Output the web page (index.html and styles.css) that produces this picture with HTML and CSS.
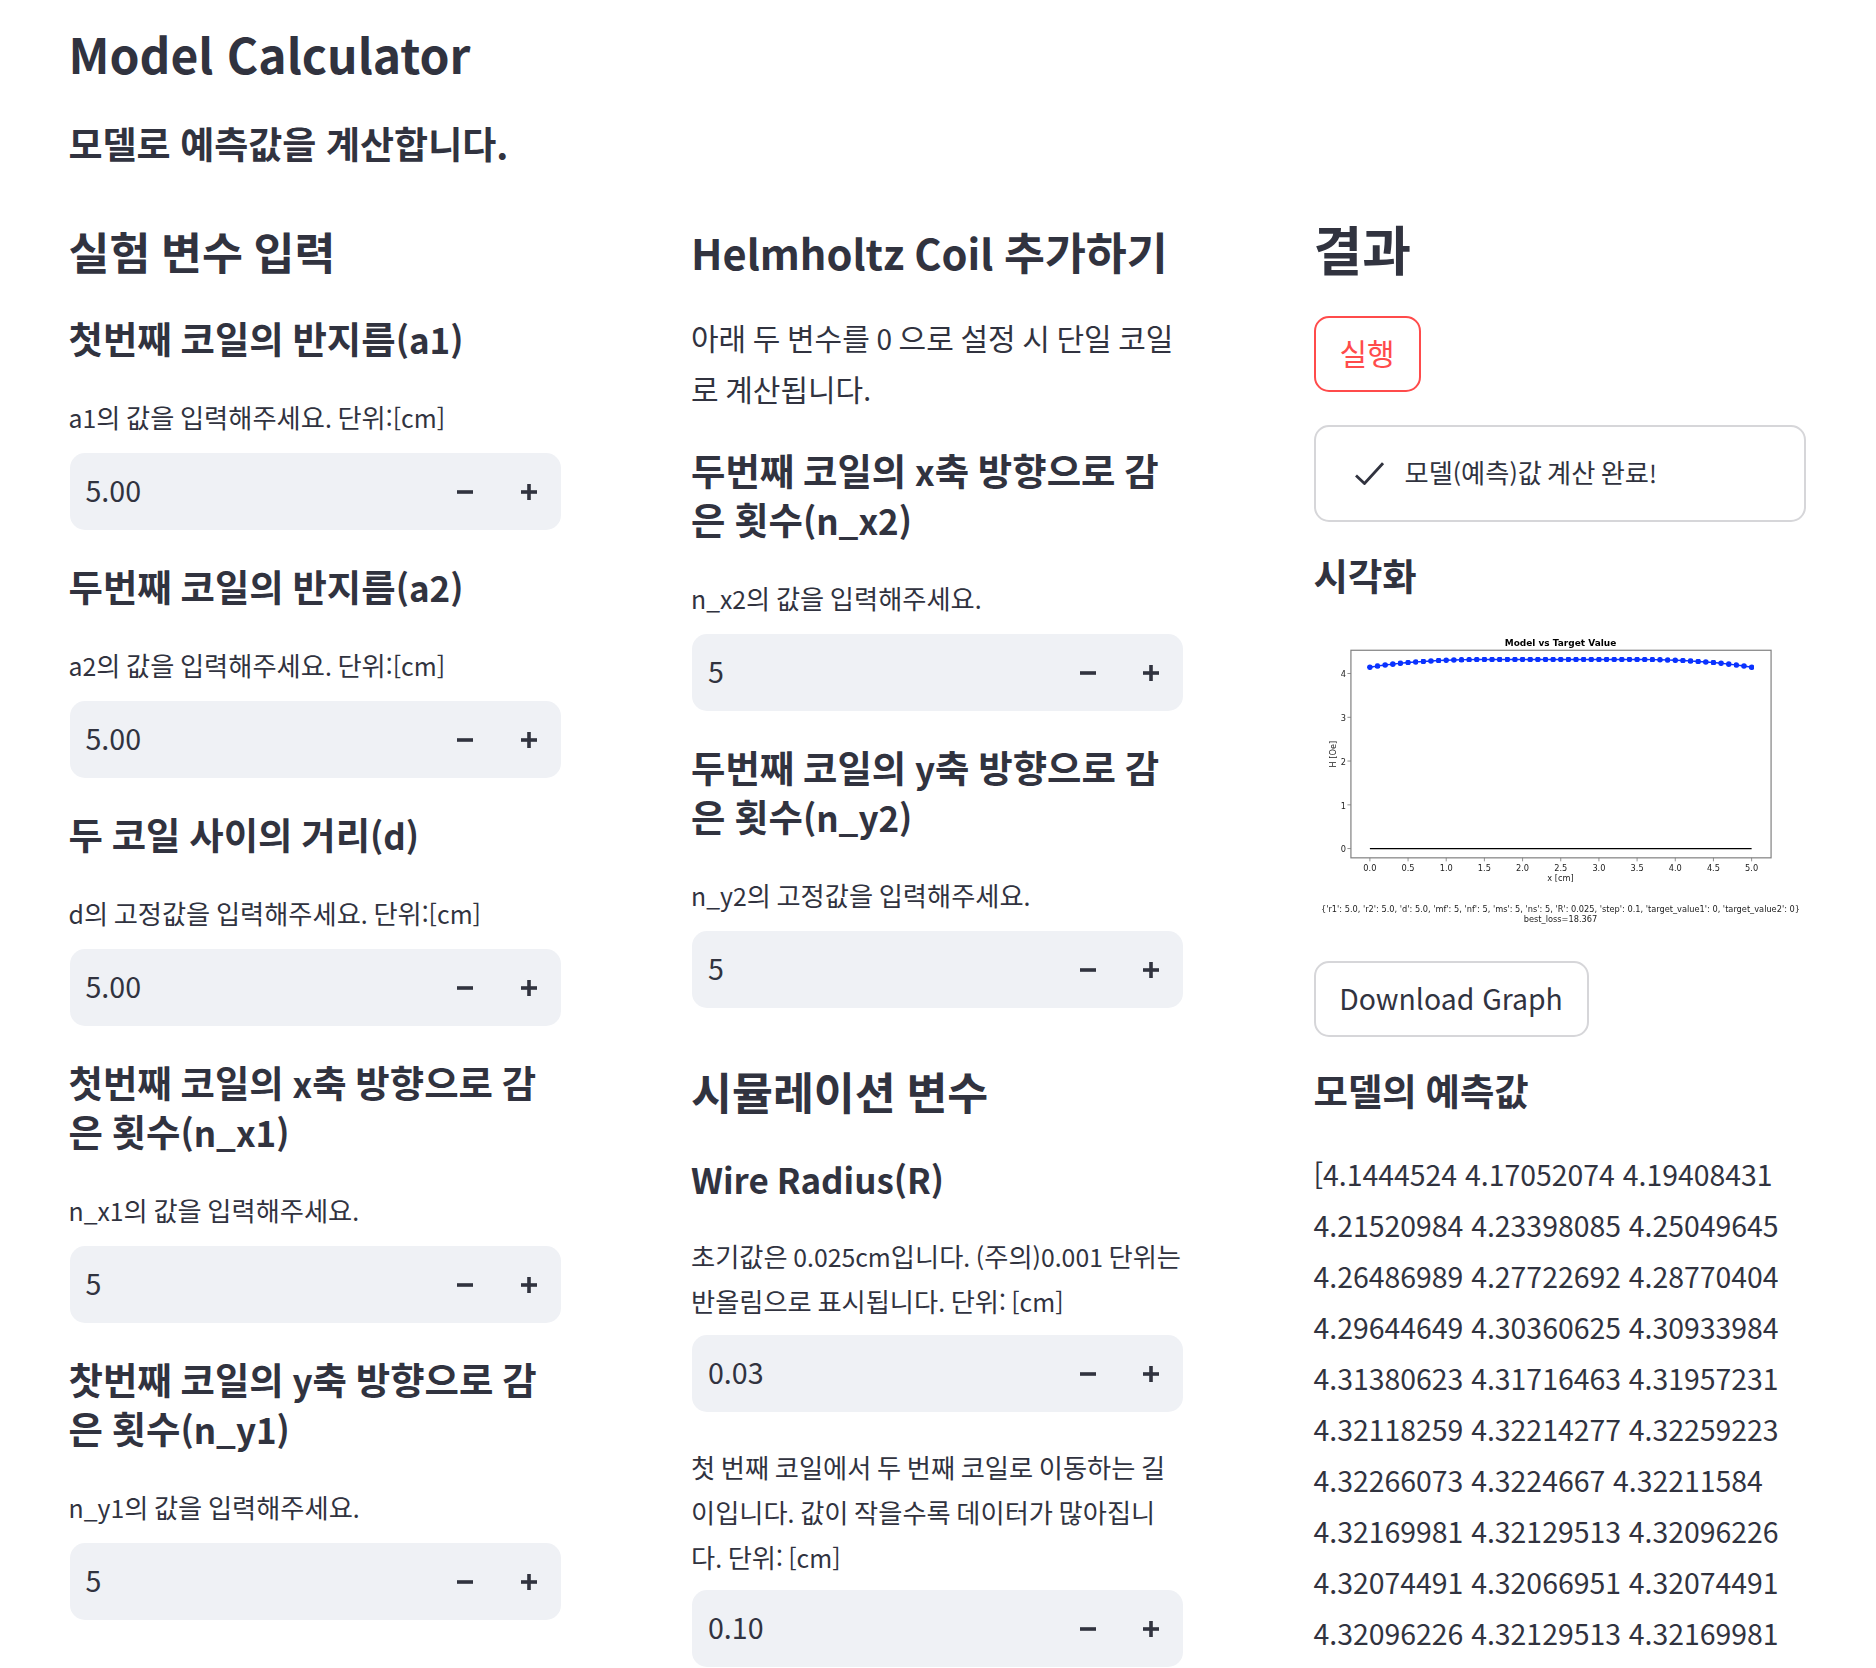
FILE: index.html
```html
<!DOCTYPE html>
<html lang="ko">
<head>
<meta charset="utf-8">
<title>Model Calculator</title>
<link rel="stylesheet" href="styles.css">
</head>
<body>
<svg class="defs" width="0" height="0" aria-hidden="true">
  <defs>
    <marker id="dot" viewBox="0 0 6 6" refX="3" refY="3" markerWidth="5.6" markerHeight="5.6" markerUnits="userSpaceOnUse"><circle cx="3" cy="3" r="3" fill="#0a32ff"/></marker>
    <symbol id="minus" viewBox="0 0 16 16"><rect x="0" y="6.2" width="16" height="3.6"/></symbol>
    <symbol id="plus" viewBox="0 0 16 16"><rect x="0" y="6.2" width="16" height="3.6"/><rect x="6.2" y="0" width="3.6" height="16"/></symbol>
  </defs>
</svg>
<main class="page">
  <h1 class="title">Model Calculator</h1>
  <p class="subtitle">모델로 예측값을 계산합니다.</p>
  <div class="columns">
    <section class="col">
      <h2 class="h2">실험 변수 입력</h2>
      <h3 class="h3 first">첫번째 코일의 반지름<span class="lat">(a1)</span></h3>
      <p class="label"><span class="lat">a1</span>의 값을 입력해주세요<span class="lat">.</span> 단위<span class="lat">:[cm]</span></p>
      <div class="num"><span class="val">5.00</span><span class="step"><svg class="ic"><use href="#minus"/></svg></span><span class="step"><svg class="ic"><use href="#plus"/></svg></span></div>
      <h3 class="h3">두번째 코일의 반지름<span class="lat">(a2)</span></h3>
      <p class="label"><span class="lat">a2</span>의 값을 입력해주세요<span class="lat">.</span> 단위<span class="lat">:[cm]</span></p>
      <div class="num"><span class="val">5.00</span><span class="step"><svg class="ic"><use href="#minus"/></svg></span><span class="step"><svg class="ic"><use href="#plus"/></svg></span></div>
      <h3 class="h3">두 코일 사이의 거리<span class="lat">(d)</span></h3>
      <p class="label"><span class="lat">d</span>의 고정값을 입력해주세요<span class="lat">.</span> 단위<span class="lat">:[cm]</span></p>
      <div class="num"><span class="val">5.00</span><span class="step"><svg class="ic"><use href="#minus"/></svg></span><span class="step"><svg class="ic"><use href="#plus"/></svg></span></div>
      <h3 class="h3">첫번째 코일의 <span class="lat">x</span>축 방향으로 감은 횟수<span class="lat">(n_x1)</span></h3>
      <p class="label"><span class="lat">n_x1</span>의 값을 입력해주세요<span class="lat">.</span></p>
      <div class="num"><span class="val">5</span><span class="step"><svg class="ic"><use href="#minus"/></svg></span><span class="step"><svg class="ic"><use href="#plus"/></svg></span></div>
      <h3 class="h3">찻번째 코일의 <span class="lat">y</span>축 방향으로 감은 횟수<span class="lat">(n_y1)</span></h3>
      <p class="label"><span class="lat">n_y1</span>의 값을 입력해주세요<span class="lat">.</span></p>
      <div class="num"><span class="val">5</span><span class="step"><svg class="ic"><use href="#minus"/></svg></span><span class="step"><svg class="ic"><use href="#plus"/></svg></span></div>
    </section>
    <section class="col">
      <h2 class="h2"><span class="lat">Helmholtz Coil</span> 추가하기</h2>
      <p class="body">아래 두 변수를 <span class="lat">0</span> 으로 설정 시 단일 코일로 계산됩니다<span class="lat">.</span></p>
      <h3 class="h3">두번째 코일의 <span class="lat">x</span>축 방향으로 감은 횟수<span class="lat">(n_x2)</span></h3>
      <p class="label"><span class="lat">n_x2</span>의 값을 입력해주세요<span class="lat">.</span></p>
      <div class="num"><span class="val">5</span><span class="step"><svg class="ic"><use href="#minus"/></svg></span><span class="step"><svg class="ic"><use href="#plus"/></svg></span></div>
      <h3 class="h3">두번째 코일의 <span class="lat">y</span>축 방향으로 감은 횟수<span class="lat">(n_y2)</span></h3>
      <p class="label"><span class="lat">n_y2</span>의 고정값을 입력해주세요<span class="lat">.</span></p>
      <div class="num"><span class="val">5</span><span class="step"><svg class="ic"><use href="#minus"/></svg></span><span class="step"><svg class="ic"><use href="#plus"/></svg></span></div>
      <h2 class="h2 section">시뮬레이션 변수</h2>
      <h3 class="h3 first"><span class="lat">Wire Radius(R)</span></h3>
      <p class="label note-a">초기값은 <span class="lat">0.025cm</span>입니다<span class="lat">.</span> <span class="lat">(</span>주의<span class="lat">)0.001</span> 단위는 반올림으로 표시됩니다<span class="lat">.</span> 단위<span class="lat">: [cm]</span></p>
      <div class="num tight"><span class="val">0.03</span><span class="step"><svg class="ic"><use href="#minus"/></svg></span><span class="step"><svg class="ic"><use href="#plus"/></svg></span></div>
      <p class="label note-b">첫 번째 코일에서 두 번째 코일로 이동하는 길이입니다<span class="lat">.</span> 값이 작을수록 데이터가 많아집니다<span class="lat">.</span> 단위<span class="lat">: [cm]</span></p>
      <div class="num tighter"><span class="val">0.10</span><span class="step"><svg class="ic"><use href="#minus"/></svg></span><span class="step"><svg class="ic"><use href="#plus"/></svg></span></div>
    </section>
    <section class="col">
      <h2 class="h1b">결과</h2>
      <div class="btn run"><span>실행</span></div>
      <div class="alert">
        <svg class="check" viewBox="0 0 29 23"><path d="M1 13.5 L9.5 21.5 L28 1.2"/></svg>
        <span class="alert-text">모델<span class="lat">(</span>예측<span class="lat">)</span>값 계산 완료<span class="lat">!</span></span>
      </div>
      <h3 class="h3 viz">시각화</h3>
      <svg class="chart" viewBox="0 0 493 320" role="img">
        <rect class="frame" x="37" y="31" width="421" height="208"/>
        <g class="ticks">
          <path d="M33.5 54.3H37M33.5 98.2H37M33.5 142H37M33.5 185.9H37M33.5 229.7H37"/>
          <path d="M56 239v3.5M94.25 239v3.5M132.5 239v3.5M170.75 239v3.5M209 239v3.5M247.25 239v3.5M285.5 239v3.5M323.75 239v3.5M362 239v3.5M400.25 239v3.5M438.5 239v3.5"/>
        </g>
        <line class="target" x1="56" y1="229.7" x2="438.5" y2="229.7"/>
        <polyline class="model" points="56,48 63.65,46.8 71.3,45.8 78.95,44.9 86.6,44 94.25,43.3 101.9,42.7 109.55,42.2 117.2,41.7 124.85,41.3 132.5,41 140.15,40.7 147.8,40.5 155.45,40.4 163.1,40.3 170.75,40.2 178.4,40.2 186.05,40.2 193.7,40.2 201.35,40.2 209,40.2 216.65,40.2 224.3,40.2 231.95,40.2 239.6,40.2 247.25,40.2 254.9,40.2 262.55,40.2 270.2,40.2 277.85,40.2 285.5,40.2 293.15,40.2 300.8,40.2 308.45,40.2 316.1,40.2 323.75,40.2 331.4,40.3 339.05,40.4 346.7,40.5 354.35,40.7 362,41 369.65,41.3 377.3,41.7 384.95,42.2 392.6,42.7 400.25,43.3 407.9,44 415.55,44.9 423.2,45.8 430.85,46.8 438.5,48"/>
        <text class="ct bold" x="247" y="26.5">Model vs Target Value</text>
        <g class="yl">
          <text x="32" y="58">4</text><text x="32" y="102">3</text><text x="32" y="146">2</text><text x="32" y="190">1</text><text x="32" y="233.5">0</text>
        </g>
        <g class="ct">
          <text x="56" y="252">0.0</text><text x="94.25" y="252">0.5</text><text x="132.5" y="252">1.0</text><text x="170.75" y="252">1.5</text><text x="209" y="252">2.0</text><text x="247.25" y="252">2.5</text><text x="285.5" y="252">3.0</text><text x="323.75" y="252">3.5</text><text x="362" y="252">4.0</text><text x="400.25" y="252">4.5</text><text x="438.5" y="252">5.0</text>
          <text x="247" y="262">x [cm]</text>
          <text x="247" y="293">{'r1': 5.0, 'r2': 5.0, 'd': 5.0, 'mf': 5, 'nf': 5, 'ms': 5, 'ns': 5, 'R': 0.025, 'step': 0.1, 'target_value1': 0, 'target_value2': 0}</text>
          <text x="247" y="303">best_loss=18.367</text>
          <text x="22" y="135" transform="rotate(-90 22 135)">H [Oe]</text>
        </g>
      </svg>
      <div class="btn dl"><span>Download Graph</span></div>
      <h3 class="h3 pred">모델의 예측값</h3>
      <p class="body values">[4.1444524 4.17052074 4.19408431 4.21520984 4.23398085 4.25049645 4.26486989 4.27722692 4.28770404 4.29644649 4.30360625 4.30933984 4.31380623 4.31716463 4.31957231 4.32118259 4.32214277 4.32259223 4.32266073 4.3224667 4.32211584 4.32169981 4.32129513 4.32096226 4.32074491 4.32066951 4.32074491 4.32096226 4.32129513 4.32169981</p>
    </section>
  </div>
</main>
</body>
</html>
```

FILE: styles.css
```css
* { box-sizing: border-box; }
html, body { margin: 0; height: 1668px; overflow: hidden; background: #fff; }
body { font-family: "Noto Sans CJK KR", "Noto Sans", sans-serif; color: #31333f; }
h1, h2, h3, p { margin: 0; }
.defs { position: absolute; }
.lat { font-size: 0.935em; line-height: 1; }
.page { padding: 22px 0 0 68.5px; }
.title { font-size: 48px; line-height: 62px; font-weight: 600; }
.subtitle { font-size: 37px; line-height: 50px; font-weight: 600; margin-top: 34px; word-spacing: -0.02em; }
.columns { display: grid; grid-template-columns: 492px 492px 492.5px; column-gap: 130.5px; margin-top: 53px; align-items: start; }
.col { display: flex; flex-direction: column; min-width: 0; }
.h2 { font-size: 44.5px; line-height: 60px; font-weight: 600; word-spacing: -0.04em; }
.h2.section { margin-top: 53px; }
.h1b { font-size: 53px; line-height: 60px; font-weight: 600; margin-top: -3px; }
.h3 { font-size: 37.4px; line-height: 49px; font-weight: 600; margin-top: 32px; word-spacing: -0.045em; }
.h3.first { margin-top: 33px; }
.label { font-size: 26.25px; line-height: 45px; margin-top: 32px; word-spacing: -0.065em; }
.label .lat { font-size: 0.945em; }
.label.note-a { margin-top: 31px; }
.label.note-b { margin-top: 33px; }
.body { font-size: 30px; line-height: 51px; margin-top: 31px; word-spacing: -0.06em; }
.num { display: flex; align-items: center; height: 77px; margin: 13px 0 0 1px; border-radius: 15px; background: #eff1f5; }
.num.tight { margin-top: 11px; }
.num.tighter { margin-top: 10px; }
.val { flex: 1; padding: 0 0 4px 16px; font-size: 28.6px; }
.step { width: 63.5px; display: flex; justify-content: center; align-items: center; }
.ic { width: 16px; height: 16px; fill: #31333f; }
.btn { display: flex; align-items: center; justify-content: center; height: 76px; border: 2px solid #d6d6d9; border-radius: 15px; font-size: 28.4px; align-self: flex-start; padding-bottom: 4px; }
.run { width: 107px; margin-top: 38px; border-color: #ff4b4b; color: #ff4b4b; font-size: 30px; }
.alert { display: flex; align-items: center; gap: 21px; height: 97px; margin-top: 33px; padding-left: 39px; border: 2px solid #d6d6d9; border-radius: 15px; font-size: 26.25px; word-spacing: -0.08em; }
.alert-text { padding-bottom: 4px; }
.check { width: 29px; height: 23px; fill: none; stroke: #31333f; stroke-width: 2.8; }
.viz { margin-top: 29px; }
.chart { display: block; width: 492px; height: 320px; margin-top: 19px; filter: blur(0.35px); }
.frame { fill: #fff; stroke: #808080; stroke-width: 1.2; }
.ticks path { stroke: #777; stroke-width: 0.8; fill: none; }
.target { stroke: #000; stroke-width: 1.3; }
.model { fill: none; stroke: #0a32ff; stroke-width: 1.4; marker-start: url(#dot); marker-mid: url(#dot); marker-end: url(#dot); }
.chart text { font-family: "DejaVu Sans", sans-serif; font-size: 8.25px; fill: #222; word-spacing: 0; }
.ct text, text.ct { text-anchor: middle; }
.yl text { text-anchor: end; }
.chart .bold { font-size: 9px; font-weight: 700; fill: #000; }
.dl { width: 275px; margin-top: 22px; }
.pred { margin-top: 29px; }
.values { margin-top: 33px; font-size: 28.4px; word-spacing: 0; }
```
